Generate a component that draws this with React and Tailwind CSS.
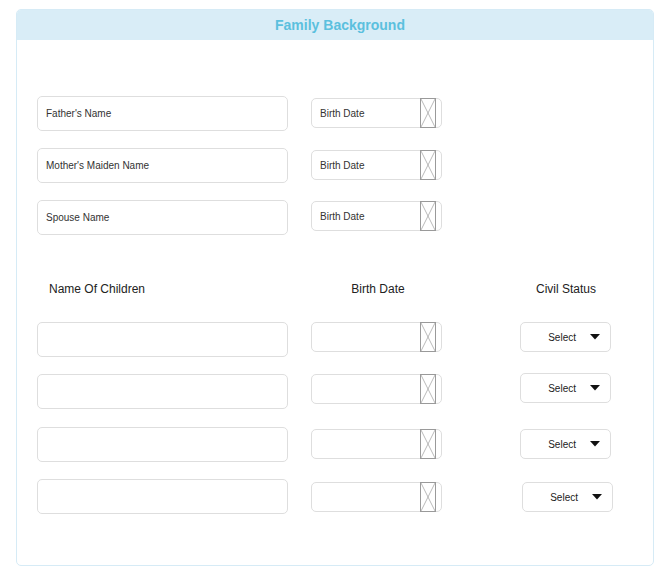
import React from 'react';

const DateBox = ({ label, className = '' }) => (
  <div className={`flex h-[30px] w-[131px] items-center justify-between rounded-[5px] border border-[#dedede] bg-white pl-[8px] pr-[5px] ${className}`}>
    <span className="text-[10px] text-[#333]">{label}</span>
    <svg width="16" height="30" viewBox="0 0 16 30" className="-my-px">
      <rect x="0.5" y="0.5" width="15" height="29" fill="white" stroke="#9a9a9a" />
      <line x1="1" y1="1" x2="15" y2="29" stroke="#a8a8a8" strokeWidth="0.8" />
      <line x1="15" y1="1" x2="1" y2="29" stroke="#a8a8a8" strokeWidth="0.8" />
    </svg>
  </div>
);

const NameBox = ({ label }) => (
  <div className="flex h-[35px] w-[251px] items-center rounded-[5px] border border-[#dedede] bg-white px-[8px]">
    <span className="text-[10px] text-[#333]">{label}</span>
  </div>
);

const SelectBox = ({ className = '' }) => (
  <div className={`flex h-[30px] w-[91px] items-center justify-end gap-[14px] rounded-[5px] border border-[#dedede] bg-white pr-[10px] ${className}`}>
    <span className="text-[10px] text-[#222]">Select</span>
    <svg width="10" height="6" viewBox="0 0 10 6">
      <path d="M0 0 L10 0 L5 5.5 Z" fill="#111" />
    </svg>
  </div>
);

const parents = [
  { name: "Father's Name", dateTop: 'mt-[2px]' },
  { name: "Mother's Maiden Name", dateTop: 'mt-[2px]' },
  { name: 'Spouse Name', dateTop: 'mt-[1px]' },
];

const children = [
  { dateTop: 'mt-0', selTop: 'mt-0', selLeft: 'ml-[78px]', gap: 'mt-[24px]' },
  { dateTop: 'mt-0', selTop: '-mt-px', selLeft: 'ml-[78px]', gap: 'mt-[17px]' },
  { dateTop: 'mt-[2px]', selTop: 'mt-[2px]', selLeft: 'ml-[78px]', gap: 'mt-[18px]' },
  { dateTop: 'mt-[3px]', selTop: 'mt-[3px]', selLeft: 'ml-[80px]', gap: 'mt-[17px]' },
];

export default function App() {
  return (
    <div className="min-h-[576px] bg-white pt-[9px] font-['Liberation_Sans',Arial,sans-serif]">
      <div className="ml-[16px] h-[557px] w-[638px] overflow-hidden rounded-[5px] border border-[#d6ebf6] bg-white">
        <div className="flex h-[30px] items-center justify-center bg-[#d9edf7] pl-[10px]">
          <h2 className="text-[14px] font-bold text-[#5bc0de]">Family Background</h2>
        </div>

        <div className="pl-[20px] pt-[56px]">
          <div className="flex flex-col gap-[17px]">
            {parents.map((p) => (
              <div key={p.name} className="flex items-start">
                <NameBox label={p.name} />
                <DateBox label="Birth Date" className={`ml-[23px] ${p.dateTop}`} />
              </div>
            ))}
          </div>

          <div className="mt-[45px] flex text-[12px] text-[#222]">
            <div className="w-[251px] pl-[12px]">Name Of Children</div>
            <div className="ml-[23px] w-[131px] pl-[3px] text-center">Birth Date</div>
            <div className="ml-[78px] w-[91px] pl-px text-center">Civil Status</div>
          </div>

          {children.map((c, i) => (
            <div key={i} className={`flex items-start ${c.gap}`}>
              <NameBox label="" />
              <DateBox label="" className={`ml-[23px] ${c.dateTop}`} />
              <SelectBox className={`${c.selLeft} ${c.selTop}`} />
            </div>
          ))}
        </div>
      </div>
    </div>
  );
}
